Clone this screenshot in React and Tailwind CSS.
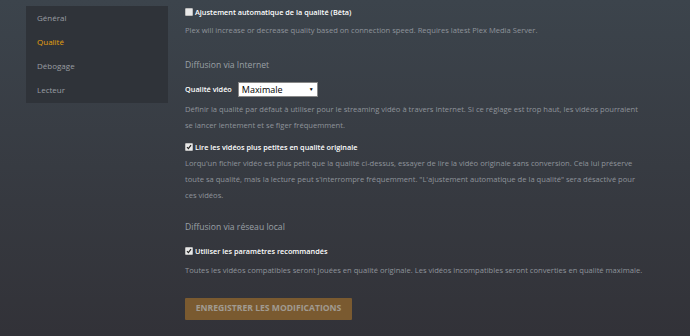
import React from "react";

const Check = ({ checked }) => (
  <span className="inline-flex items-center justify-center w-[8px] h-[8px] bg-[#e8e8e8] border border-[#bdbdbd] rounded-[1px] shrink-0">
    {checked && (
      <svg width="6" height="6" viewBox="0 0 6 6">
        <path d="M1 3.2 L2.4 4.6 L5 1.2" stroke="#222" strokeWidth="1.2" fill="none" />
      </svg>
    )}
  </span>
);

const Option = ({ checked, label }) => (
  <label className="flex items-center gap-[2px] text-[7.3px] font-semibold text-white leading-[12px]">
    <Check checked={checked} />
    {label}
  </label>
);

const Help = ({ children, className = "" }) => (
  <p className={`text-[7.6px] leading-[16px] text-[#8f949b] ${className}`}>{children}</p>
);

const App = () => {
  const menu = ["Général", "Qualité", "Débogage", "Lecteur"];
  return (
    <div
      className="w-[690px] h-[336px] overflow-hidden flex items-start pl-[26px] pt-[6px] bg-gradient-to-b from-[#3c444c] to-[#323238]"
      style={{ fontFamily: '"Open Sans", sans-serif' }}
    >
      {/* Sidebar */}
      <nav className="w-[142px] bg-[#2f3339] pt-[0px] pb-[1px] flex flex-col">
        {menu.map((item) => (
          <div
            key={item}
            className={`h-[24px] flex items-center pl-[11px] text-[8px] ${
              item === "Qualité" ? "text-[#e5a00d]" : "text-[#9a9ea3]"
            }`}
          >
            {item}
          </div>
        ))}
      </nav>

      {/* Settings */}
      <main className="ml-[17px] w-[472px]">
        <Option label="Ajustement automatique de la qualité (Bêta)" />
        <Help className="mt-[4px]">
          Plex will increase or decrease quality based on connection speed. Requires latest Plex Media Server.
        </Help>

        <h3 className="mt-[21px] text-[8.6px] text-[#9aa0a6]">Diffusion via Internet</h3>

        <div className="mt-[10px] flex items-center gap-[6px]">
          <span className="text-[7.3px] font-semibold text-white">Qualité vidéo</span>
          <div className="w-[80px] h-[15px] bg-white border border-[#888] flex items-center justify-between px-[3px]">
            <span className="text-[9px] text-black leading-none">Maximale</span>
            <span className="text-[5px] text-black">▼</span>
          </div>
        </div>
        <Help className="mt-[4px] pr-[10px]">
          Définir la qualité par défaut à utiliser pour le streaming vidéo à travers Internet. Si ce réglage est trop haut, les vidéos pourraient se lancer lentement et se figer fréquemment.
        </Help>

        <div className="mt-[8px]">
          <Option checked label="Lire les vidéos plus petites en qualité originale" />
        </div>
        <Help className="mt-[2px] pr-[18px]">
          Lorqu'un fichier vidéo est plus petit que la qualité ci-dessus, essayer de lire la vidéo originale sans conversion. Cela lui préserve toute sa qualité, mais la lecture peut s'interrompre fréquemment. "L'ajustement automatique de la qualité" sera désactivé pour ces vidéos.
        </Help>

        <h3 className="mt-[18px] text-[8.6px] text-[#9aa0a6]">Diffusion via réseau local</h3>

        <div className="mt-[11px]">
          <Option checked label="Utiliser les paramètres recommandés" />
        </div>
        <Help className="mt-[5px]">
          Toutes les vidéos compatibles seront jouées en qualité originale. Les vidéos incompatibles seront converties en qualité maximale.
        </Help>

        <button className="mt-[20px] w-[167px] h-[22px] bg-[#7a5a30] text-[#a19a90] text-[8.6px] font-bold uppercase rounded-[1px]">
          Enregistrer les modifications
        </button>
      </main>
    </div>
  );
};

export default App;
